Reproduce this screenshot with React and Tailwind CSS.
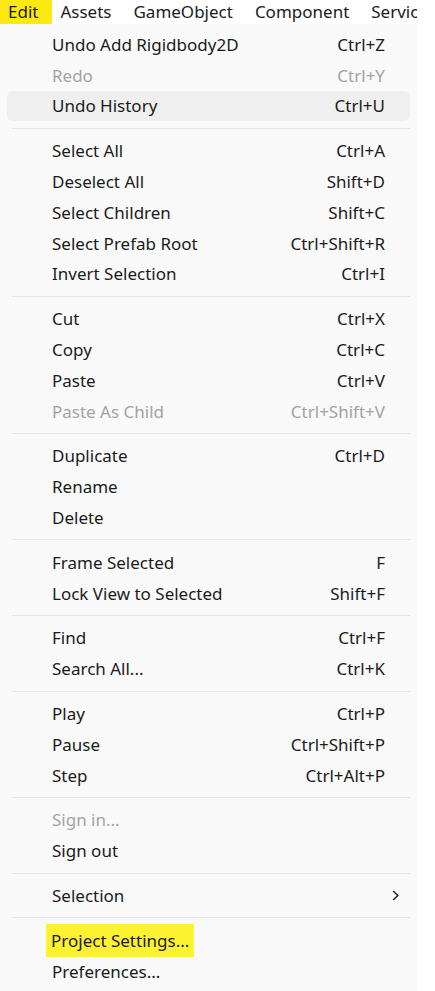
const groups = [
  [
    { label: "Undo Add Rigidbody2D", key: "Ctrl+Z" },
    { label: "Redo", key: "Ctrl+Y", disabled: true },
    { label: "Undo History", key: "Ctrl+U", hover: true },
  ],
  [
    { label: "Select All", key: "Ctrl+A" },
    { label: "Deselect All", key: "Shift+D" },
    { label: "Select Children", key: "Shift+C" },
    { label: "Select Prefab Root", key: "Ctrl+Shift+R" },
    { label: "Invert Selection", key: "Ctrl+I" },
  ],
  [
    { label: "Cut", key: "Ctrl+X" },
    { label: "Copy", key: "Ctrl+C" },
    { label: "Paste", key: "Ctrl+V" },
    { label: "Paste As Child", key: "Ctrl+Shift+V", disabled: true },
  ],
  [
    { label: "Duplicate", key: "Ctrl+D" },
    { label: "Rename" },
    { label: "Delete" },
  ],
  [
    { label: "Frame Selected", key: "F" },
    { label: "Lock View to Selected", key: "Shift+F" },
  ],
  [
    { label: "Find", key: "Ctrl+F" },
    { label: "Search All...", key: "Ctrl+K" },
  ],
  [
    { label: "Play", key: "Ctrl+P" },
    { label: "Pause", key: "Ctrl+Shift+P" },
    { label: "Step", key: "Ctrl+Alt+P" },
  ],
  [
    { label: "Sign in...", disabled: true },
    { label: "Sign out" },
  ],
  [{ label: "Selection", submenu: true }],
  [
    { label: "Project Settings...", marked: true },
    { label: "Preferences..." },
  ],
];

function MenuRow({ item }) {
  const tone = item.disabled ? "text-[#a3a3a3]" : "text-[#1b1b1b]";
  return (
    <div
      className={`mx-[7px] flex h-[30.8px] items-center rounded-md pl-[45px] pr-[25px] ${
        item.hover ? "bg-[#efefef]" : ""
      } ${tone}`}
    >
      <span className="flex-1 leading-none">
        {item.marked ? (
          <span className="-ml-[6px] bg-[#fdf22f] px-[5px] py-[5px]">{item.label}</span>
        ) : (
          item.label
        )}
      </span>
      {item.key && <span className="leading-none">{item.key}</span>}
      {item.submenu && (
        <svg width="7" height="11" viewBox="0 0 7 11" className="-mr-[14px] text-[#2a2a2a]">
          <path d="M1.2 1 L5.8 5.5 L1.2 10" fill="none" stroke="currentColor" strokeWidth="1.6" />
        </svg>
      )}
    </div>
  );
}

export default function App() {
  return (
    <div
      className="min-h-[991px] w-[435px] bg-white text-[17px]"
      style={{ fontFamily: '"Noto Sans", "Open Sans", sans-serif' }}
    >
      <div className="flex h-[24px] w-[417px] items-center overflow-hidden whitespace-nowrap text-[#1b1b1b]">
        <span className="flex h-full items-center bg-[#fde910] pl-[8px] pr-[14px]">Edit</span>
        <span className="ml-[8px]">Assets</span>
        <span className="ml-[22px]">GameObject</span>
        <span className="ml-[22px]">Component</span>
        <span className="ml-[22px]">Services</span>
      </div>
      <div className="w-[417px] overflow-hidden bg-[#f9f9f9] pt-[5px] pb-[4px]">
        {groups.map((group, gi) => (
          <div key={gi}>
            {gi > 0 && (
              <div className="flex h-[14px] items-center">
                <div className="ml-[12px] h-px w-[398px] bg-[#e3e3e3]" />
              </div>
            )}
            {group.map((item) => (
              <MenuRow key={item.label} item={item} />
            ))}
          </div>
        ))}
      </div>
    </div>
  );
}
